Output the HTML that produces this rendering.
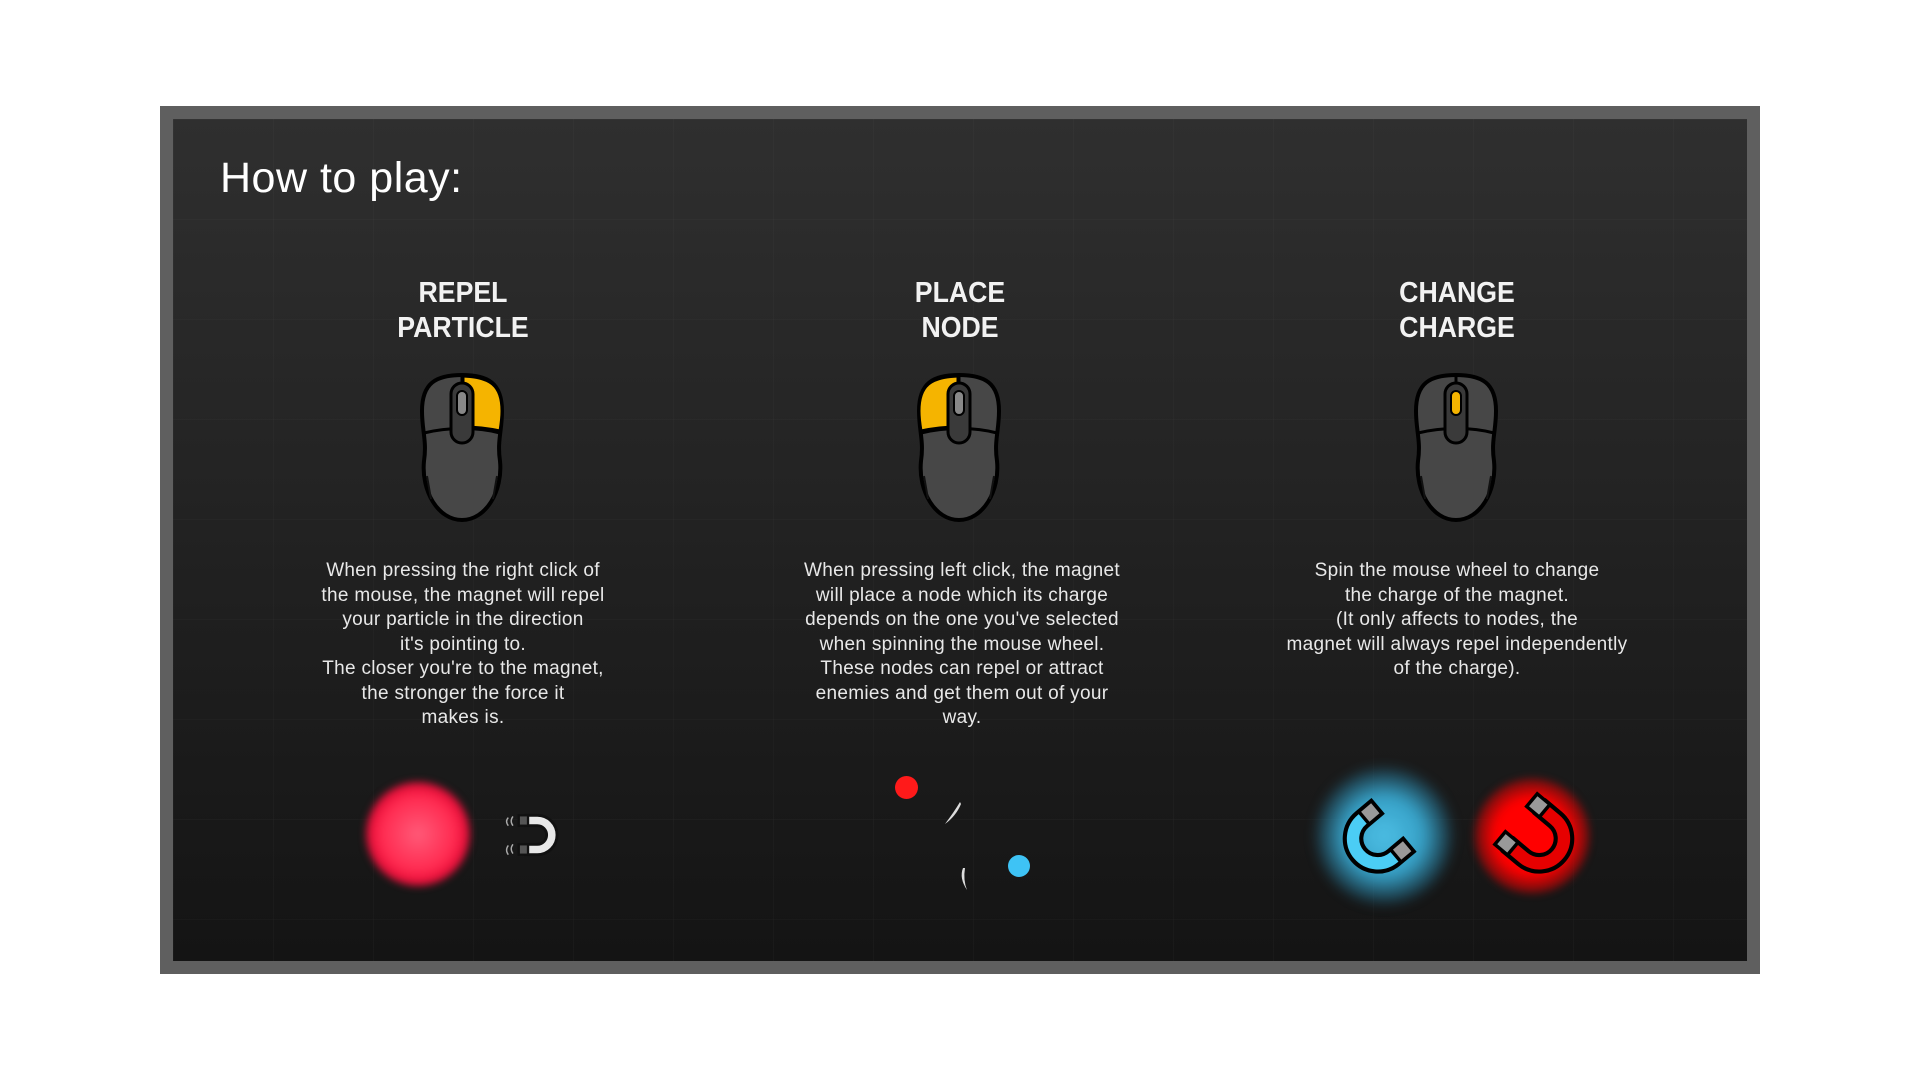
<!DOCTYPE html>
<html><head><meta charset="utf-8"><style>
html,body{margin:0;padding:0;width:1920px;height:1080px;background:#fff;overflow:hidden;font-family:"Liberation Sans",sans-serif}
.panel{position:absolute;left:160px;top:106px;width:1600px;height:868px;background:#5f5f5f}
.inner{position:absolute;left:13px;top:13px;right:13px;bottom:13px;
background-image:linear-gradient(rgba(255,255,255,0.02) 1px,transparent 1px),linear-gradient(90deg,rgba(255,255,255,0.02) 1px,transparent 1px),linear-gradient(#2f2f2f,#141414);background-size:100px 100px,100px 100px,100% 100%}
.t{position:absolute;color:#f2f2f2;text-align:center}
h1{position:absolute;left:220px;top:154px;margin:0;font-size:43px;font-weight:normal;color:#fff;letter-spacing:0.5px}
.h{font-size:29px;line-height:35px;width:300px;top:276px;font-weight:bold;transform:scaleX(0.92)}
.p{font-size:19px;line-height:24.5px;width:420px;top:559px;color:#e8e8e8;letter-spacing:0.3px}
svg{position:absolute}
.glow{position:absolute;border-radius:50%}
</style></head><body>
<div class="panel"><div class="inner"></div></div>
<h1>How to play:</h1>
<div class="t h" style="left:313px">REPEL<br>PARTICLE</div>
<div class="t h" style="left:810px">PLACE<br>NODE</div>
<div class="t h" style="left:1307px">CHANGE<br>CHARGE</div>

<svg width="0" height="0"><defs>
<g id="m">
<path d="M44 4 C18 4 4 12 4 40 C4 60 9 70 6 90 C3 120 20 149 44 149 C68 149 85 120 82 90 C79 70 84 60 84 40 C84 12 70 4 44 4Z" fill="#474747" stroke="#000" stroke-width="4"/>
</g>
</defs></svg>

<svg style="left:418px;top:371px" width="89" height="153" viewBox="0 0 89 153">
<use href="#m"/>
<path d="M45 5 C72 6 84 14 84 40 C84 48 83 54 82 60 C68 57 56 56 45 56Z" fill="#f5b400" stroke="#000" stroke-width="3"/>
<path d="M6 62 C30 56 60 56 82 62" fill="none" stroke="#000" stroke-width="3"/>
<path d="M44 5 V56" stroke="#000" stroke-width="3"/>
<rect x="33" y="12" width="22" height="60" rx="11" fill="#3a3a3a" stroke="#000" stroke-width="3"/>
<rect x="39" y="20" width="10" height="24" rx="5" fill="#888" stroke="#000" stroke-width="2"/>
<path d="M9 105 L13 128 M79 105 L75 128" stroke="#111" stroke-width="2"/>
</svg>
<svg style="left:915px;top:371px" width="89" height="153" viewBox="0 0 89 153">
<use href="#m"/>
<path d="M43 5 C16 6 4 14 4 40 C4 48 5 54 6 60 C20 57 32 56 43 56Z" fill="#f5b400" stroke="#000" stroke-width="3"/>
<path d="M6 62 C30 56 60 56 82 62" fill="none" stroke="#000" stroke-width="3"/>
<path d="M44 5 V56" stroke="#000" stroke-width="3"/>
<rect x="33" y="12" width="22" height="60" rx="11" fill="#3a3a3a" stroke="#000" stroke-width="3"/>
<rect x="39" y="20" width="10" height="24" rx="5" fill="#888" stroke="#000" stroke-width="2"/>
<path d="M9 105 L13 128 M79 105 L75 128" stroke="#111" stroke-width="2"/>
</svg>
<svg style="left:1412px;top:371px" width="89" height="153" viewBox="0 0 89 153">
<use href="#m"/>
<path d="M6 62 C30 56 60 56 82 62" fill="none" stroke="#000" stroke-width="3"/>
<path d="M44 5 V56" stroke="#000" stroke-width="3"/>
<rect x="33" y="12" width="22" height="60" rx="11" fill="#3a3a3a" stroke="#000" stroke-width="3"/>
<rect x="39" y="20" width="10" height="24" rx="5" fill="#f5b400" stroke="#000" stroke-width="2"/>
<path d="M9 105 L13 128 M79 105 L75 128" stroke="#111" stroke-width="2"/>
</svg>

<div class="t p" style="left:253px">When pressing the right click of<br>the mouse, the magnet will repel<br>your particle in the direction<br>it's pointing to.<br>The closer you're to the magnet,<br>the stronger the force it<br>makes is.</div>
<div class="t p" style="left:752px">When pressing left click, the magnet<br>will place a node which its charge<br>depends on the one you've selected<br>when spinning the mouse wheel.<br>These nodes can repel or attract<br>enemies and get them out of your<br>way.</div>
<div class="t p" style="left:1207px;width:500px">Spin the mouse wheel to change<br>the charge of the magnet.<br>(It only affects to nodes, the<br>magnet will always repel independently<br>of the charge).</div>

<div class="glow" style="left:366px;top:782px;width:104px;height:104px;background:radial-gradient(circle,#ff5a78 0%,#ff2a50 50%,#e8103a 65%,rgba(220,0,40,0) 100%);filter:blur(4px)"></div>
<svg style="left:500px;top:806px" width="70" height="58" viewBox="0 0 60 50">
<path d="M22 8 H32 A17 17 0 0 1 32 42 H22 V33 H32 A8 8 0 0 0 32 17 H22Z" fill="#e8e8e8" stroke="#111" stroke-width="2.5"/>
<rect x="16" y="8" width="8" height="9" fill="#555" stroke="#111" stroke-width="2"/>
<rect x="16" y="33" width="8" height="9" fill="#555" stroke="#111" stroke-width="2"/>
<path d="M11 9 Q8 13 11 17 M7 10 Q4 13 7 17 M11 33 Q8 37 11 41 M7 34 Q4 38 7 42" fill="none" stroke="#aaa" stroke-width="1.2"/>
</svg>
<div class="glow" style="left:895px;top:776px;width:23px;height:23px;background:#ff1a1a"></div>
<div class="glow" style="left:1008px;top:855px;width:22px;height:22px;background:#3ec3f5"></div>
<svg style="left:940px;top:798px" width="40" height="100" viewBox="0 0 40 100">
<path d="M20 4 Q14 14 5 26 Q16 18 21 6Z" fill="#ddd"/>
<path d="M23 70 Q19 80 27 92 Q23 82 25 70Z" fill="#ddd"/>
</svg>
<div class="glow" style="left:1316px;top:768px;width:136px;height:136px;background:radial-gradient(circle,rgba(80,200,240,0.95) 0%,rgba(60,185,230,0.85) 40%,rgba(40,140,180,0.35) 65%,rgba(30,100,140,0) 85%);filter:blur(6px)"></div>
<svg style="left:1327px;top:780px" width="110" height="110" viewBox="0 0 80 80">
<g transform="rotate(-40 40 40)">
<path d="M30 16 H44 A24 24 0 0 1 44 64 H30 V52 H44 A12 12 0 0 0 44 28 H30Z" fill="#4bcdf5" stroke="#000" stroke-width="3" transform="scale(-1 1) translate(-80 0)"/>
<rect x="38" y="16" width="12" height="12" fill="#999" stroke="#000" stroke-width="2.5"/>
<rect x="38" y="52" width="12" height="12" fill="#999" stroke="#000" stroke-width="2.5"/>
</g>
</svg>
<div class="glow" style="left:1474px;top:778px;width:116px;height:116px;background:radial-gradient(circle,#ff0000 0%,#ff0000 45%,rgba(255,0,0,0.55) 62%,rgba(255,0,0,0) 80%);filter:blur(4px)"></div>
<svg style="left:1480px;top:780px" width="110" height="110" viewBox="0 0 80 80">
<g transform="rotate(40 40 40)">
<path d="M30 16 H44 A24 24 0 0 1 44 64 H30 V52 H44 A12 12 0 0 0 44 28 H30Z" fill="#e60000" stroke="#000" stroke-width="3"/>
<rect x="22" y="16" width="12" height="12" fill="#999" stroke="#000" stroke-width="2.5"/>
<rect x="22" y="52" width="12" height="12" fill="#999" stroke="#000" stroke-width="2.5"/>
</g>
</svg>
</body></html>
